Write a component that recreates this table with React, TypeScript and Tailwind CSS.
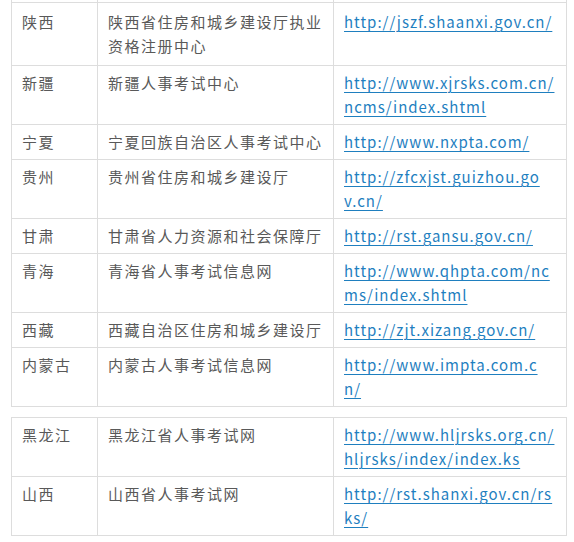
import React from "react";

type Row = { region: string; org: string; url: string[]; first?: boolean };

const table1: Row[] = [
  { region: "陕西", org: "陕西省住房和城乡建设厅执业资格注册中心", url: ["http://jszf.shaanxi.gov.cn/"], first: true },
  { region: "新疆", org: "新疆人事考试中心", url: ["http://www.xjrsks.com.cn/", "ncms/index.shtml"] },
  { region: "宁夏", org: "宁夏回族自治区人事考试中心", url: ["http://www.nxpta.com/"] },
  { region: "贵州", org: "贵州省住房和城乡建设厅", url: ["http://zfcxjst.guizhou.go", "v.cn/"] },
  { region: "甘肃", org: "甘肃省人力资源和社会保障厅", url: ["http://rst.gansu.gov.cn/"] },
  { region: "青海", org: "青海省人事考试信息网", url: ["http://www.qhpta.com/nc", "ms/index.shtml"] },
  { region: "西藏", org: "西藏自治区住房和城乡建设厅", url: ["http://zjt.xizang.gov.cn/"] },
  { region: "内蒙古", org: "内蒙古人事考试信息网", url: ["http://www.impta.com.c", "n/"] },
];

const table2: Row[] = [
  { region: "黑龙江", org: "黑龙江省人事考试网", url: ["http://www.hljrsks.org.cn/", "hljrsks/index/index.ks"] },
  { region: "山西", org: "山西省人事考试网", url: ["http://rst.shanxi.gov.cn/rs", "ks/"] },
];

const cols = "grid grid-cols-[86px_236px_233px]";

function TableRow({ row }: { row: Row }) {
  const pad = row.first ? "px-[10px] pt-[7px] pb-[7px]" : "px-[10px] py-[5px]";
  return (
    <div className={cols}>
      <div className={`${pad} border-r border-b border-[#dddddd] text-[#595959]`}>{row.region}</div>
      <div className={`${pad} border-r border-b border-[#dddddd] text-[#595959]`}>{row.org}</div>
      <div className={`${pad} border-r border-b border-[#dddddd] tracking-[1px] overflow-hidden`}>
        <a href="#" className="text-[#1f7fbf] underline underline-offset-[3px] decoration-1">
          {row.url.map((line, i) => (
            <React.Fragment key={i}>
              {i > 0 && <br />}
              <span className="whitespace-nowrap">{line}</span>
            </React.Fragment>
          ))}
        </a>
      </div>
    </div>
  );
}

export default function App() {
  return (
    <div
      className="w-[574px] h-[542px] bg-white overflow-hidden pl-[11px] text-[15px] leading-[24px] tracking-[1.5px]"
      style={{ fontFamily: '"Noto Sans CJK SC", "Microsoft YaHei", sans-serif' }}
    >
      <div className="w-[556px] border-l border-[#dddddd]">
        <div className={`${cols} h-[2px]`}>
          <div className="border-r border-[#dddddd]" />
          <div className="border-r border-[#dddddd]" />
          <div className="border-r border-[#dddddd]" />
        </div>
        <div className="border-t border-[#dddddd]">
          {table1.map((r) => (
            <TableRow key={r.region} row={r} />
          ))}
        </div>
      </div>
      <div className="w-[556px] mt-[10px] border-l border-t border-[#dddddd]">
        {table2.map((r) => (
          <TableRow key={r.region} row={r} />
        ))}
      </div>
    </div>
  );
}
